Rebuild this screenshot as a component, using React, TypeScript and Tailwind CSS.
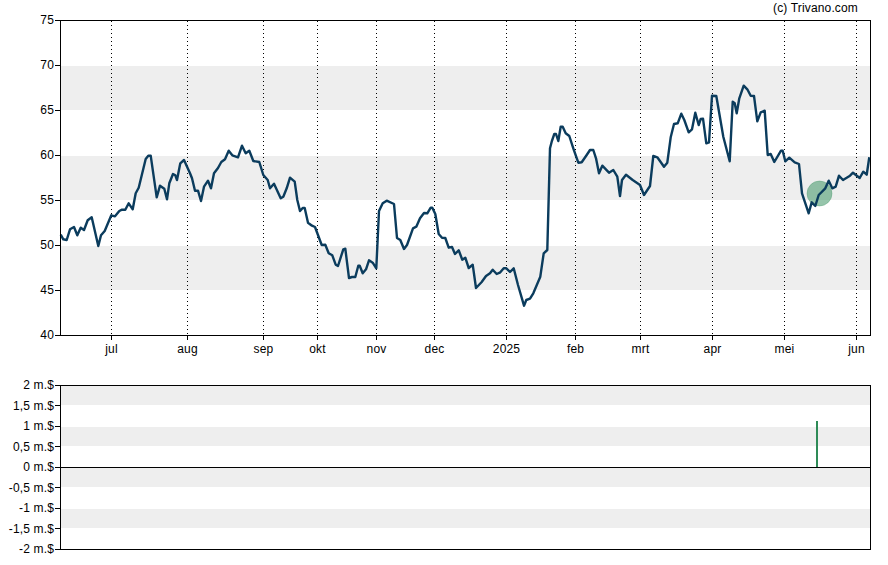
const months = [
  { label: "jul", x: 111.5 },
  { label: "aug", x: 187.5 },
  { label: "sep", x: 263.5 },
  { label: "okt", x: 317.5 },
  { label: "nov", x: 376.5 },
  { label: "dec", x: 434.5 },
  { label: "2025", x: 506.5 },
  { label: "feb", x: 575.5 },
  { label: "mrt", x: 640.5 },
  { label: "apr", x: 712.5 },
  { label: "mei", x: 784.5 },
  { label: "jun", x: 856.5 },
];

const priceLabels = ["75", "70", "65", "60", "55", "50", "45", "40"];
const priceTicks = [20.5, 65.5, 110.5, 155.5, 200.5, 245.5, 290.5, 335.5];

const volumeLabels = ["2 m.$", "1,5 m.$", "1 m.$", "0,5 m.$", "0 m.$", "-0,5 m.$", "-1 m.$", "-1,5 m.$", "-2 m.$"];
const volumeTicks = [10.5, 30.5, 51.5, 71.5, 92.5, 112.5, 133.5, 153.5, 174.5];

// traced from the picture
const pricePath = `60.7,234.7 63.3,239.3 66.7,240 70,229.3 74,227 77.3,235.3 80.7,227.7 84,230 87.7,220.3 91.7,217.3
98.3,246 101,235.3 104.7,231 111.3,215.3 115,216.3 119.3,211 122,209.7 125.3,209.7 128.7,203.3 132.7,209.3
135.7,193.3 138.7,187.7 145.7,159 148.3,155.7 150.7,155.7 156.7,197.3 160,185.7 164.3,188.7 167,199.3 169.3,183.3
173,174 175.3,175.3 177,180 180.3,163.3 184,160 190,173.3 192,178.3 195,190.7 198,190.7 201,201
204,186.7 208,180.7 211,188.3 214,173.3 218,168 221.3,162 225,159.3 228.7,150.7 232.3,155.3 238,157.3
242,145.7 245.7,153.3 249.3,150.7 253.3,161 259.3,162 263.3,175 267.7,180 270,188.3 274,183.7 280.7,198.3
283.3,196.7 286.7,188.3 290,177.7 294.7,181.7 297.3,200 300,211 302.7,208 304.7,208 308,222.7 312,225.7
315,227 321.7,245 325.3,244.7 328.7,253.3 332.3,255.3 335.7,264.7 338,266 343.3,249.3 345.3,248.7 349,278
352,277 355.3,277 358.3,265.7 359.7,265.7 362.7,273.3 366,269.3 369,260.3 372.7,262.7 376.3,268.3 379,211
382.7,203.3 386.7,200.7 394,204 397,238 400.3,240 404,249 407,245 413,228.3 416.3,226.7 420,218.3
424,213 427.3,213.3 430.7,207.7 432.3,207.7 435.3,214 438.7,234 442,237.7 445.3,238 448.7,247.7 452,247
455,254 458.7,250.3 462.3,259.7 465.3,257.7 468.7,268 472.7,264.7 476,288 481.7,282 486,276 490,273.3
492.7,269.7 496.7,274 500.3,272.3 503.7,268.3 506.3,268.3 510,272 513.7,268.3 518,285 524,305.7 526.3,300
530,298.7 533.3,293.3 540.3,276.7 543.7,253.3 547.3,250 550,148.3 551.7,141.7 554.3,134 556,134 558.3,141
560.7,126.7 562.7,126.7 565.7,133.3 569.3,136 573.3,148.3 578.3,162.7 581.7,162.3 586.7,155 590,150 593.3,150
596,158.3 599,173.3 602.3,165.7 609,172.7 613.3,170 617.3,176.7 620,196 622,180 626,174.7 632.7,180
640,185 644,195 650,186 653.3,156 657.3,157.3 664,166.7 667.3,162.7 670.7,137.3 674,124 677.7,123.3
681.3,113.7 684.3,120 688.7,132.3 692,129.3 695.3,112.7 698.7,125 700.7,119 703,118.7 706.3,143.3 709,142.3
712,95.7 716.3,96 723.3,136.7 729.7,161.3 732.7,101.7 734.7,103.3 736.7,113.3 739.3,98.3 743.7,85.7 747.3,89.3
750.7,95.7 754,96 757.3,121.3 760.7,112.3 764.7,110.7 767.7,155 770.7,154 774.3,162 781,150.7 782.7,150.7
785.3,161.3 789.3,157.7 794.7,162.3 799,164 802,193.3 808.7,213.3 811.7,202.3 815.3,206 818.7,195 825.3,188.3
828.7,180.7 832.3,188.3 835.7,186.7 839,175.7 843,180 850,175.7 853,172.7 859.7,178 863.3,171.7 866.7,174.7
869.3,157.3`;

function AxisLabels({ labels, className }: { labels: string[]; className: string }) {
  return (
    <div className={`-mt-[7px] flex w-[54px] shrink-0 flex-col items-end justify-between ${className}`}>
      {labels.map((label) => (
        <span key={label} className="h-[14px] whitespace-nowrap leading-[14px]">{label}</span>
      ))}
    </div>
  );
}

function PricePlot() {
  return (
    <svg width="834" height="316" viewBox="54 20 834 316" className="block overflow-visible">
      <rect x="60" y="66" width="811" height="44" fill="#eeeeee" />
      <rect x="60" y="156" width="811" height="44" fill="#eeeeee" />
      <rect x="60" y="246" width="811" height="44" fill="#eeeeee" />

      {months.map((m) => (
        <g key={m.label}>
          <line x1={m.x} x2={m.x} y1="21" y2="335" stroke="#000" strokeDasharray="1 3" />
          <line x1={m.x} x2={m.x} y1="335" y2="340" stroke="#000" />
        </g>
      ))}

      {priceTicks.map((y) => (
        <line key={y} x1="55" x2="60" y1={y} y2={y} stroke="#000" />
      ))}

      <circle cx="819.5" cy="193.5" r="12.5" fill="#2e8b57" fillOpacity="0.5" stroke="#2e8b57" strokeOpacity="0.3" />
      <polyline points={pricePath} fill="none" stroke="#0b3c5d" strokeWidth="2.4" strokeLinejoin="round" />
      <rect x="60.5" y="20.5" width="810" height="315" fill="none" stroke="#000" />
    </svg>
  );
}

function VolumePlot() {
  return (
    <svg width="834" height="165" viewBox="54 10 834 165" className="block overflow-visible">
      <rect x="60" y="10" width="811" height="20" fill="#eeeeee" />
      <rect x="60" y="52" width="811" height="19" fill="#eeeeee" />
      <rect x="60" y="93" width="811" height="19" fill="#eeeeee" />
      <rect x="60" y="134" width="811" height="19" fill="#eeeeee" />

      {volumeTicks.map((y) => (
        <line key={y} x1="55" x2="60" y1={y} y2={y} stroke="#000" />
      ))}

      <line x1="60" x2="871" y1="92.5" y2="92.5" stroke="#000" />
      <rect x="816" y="46" width="2" height="46" fill="#2e8b57" />
      <rect x="60.5" y="10.5" width="810" height="164" fill="none" stroke="#000" />
    </svg>
  );
}

export default function App() {
  return (
    <div className="flex h-[565px] w-[888px] flex-col overflow-hidden bg-white font-['Liberation_Sans',sans-serif] text-[12px] tracking-[0.15px] text-black">
      <div className="flex h-5 justify-end pr-[30px] leading-[16px]">(c) Trivano.com</div>

      <div className="flex h-[316px]">
        <AxisLabels labels={priceLabels} className="h-[329px]" />
        <PricePlot />
      </div>

      <div className="relative h-[49px]">
        {months.map((m) => (
          <span
            key={m.label}
            className="absolute top-[6px] -translate-x-1/2 leading-[14px]"
            style={{ left: m.x }}
          >
            {m.label}
          </span>
        ))}
      </div>

      <div className="flex h-[165px]">
        <AxisLabels labels={volumeLabels} className="h-[178px]" />
        <VolumePlot />
      </div>
    </div>
  );
}
